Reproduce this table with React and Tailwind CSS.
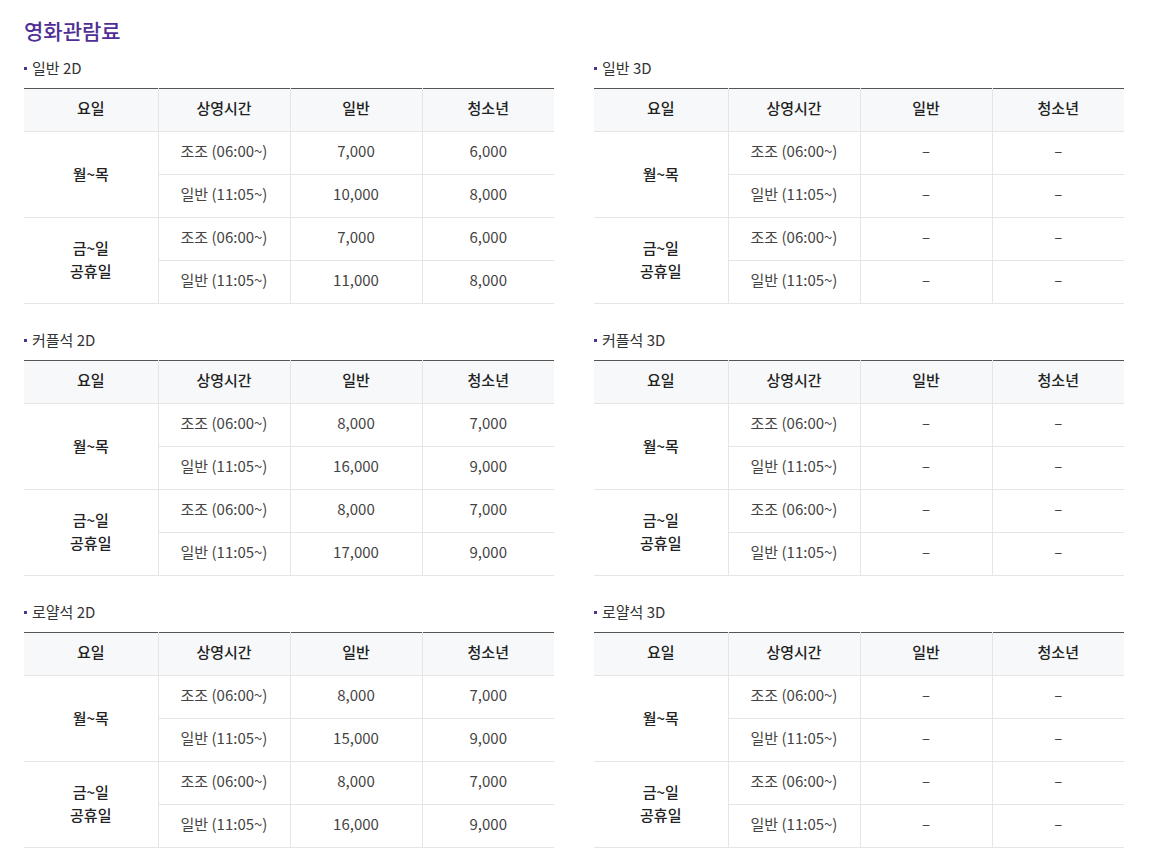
const sections = [
  {
    title: '일반 2D',
    rows: [
      ['7,000', '6,000', '10,000', '8,000'],
      ['7,000', '6,000', '11,000', '8,000'],
    ],
  },
  { title: '일반 3D', rows: null },
  {
    title: '커플석 2D',
    rows: [
      ['8,000', '7,000', '16,000', '9,000'],
      ['8,000', '7,000', '17,000', '9,000'],
    ],
  },
  { title: '커플석 3D', rows: null },
  {
    title: '로얄석 2D',
    rows: [
      ['8,000', '7,000', '15,000', '9,000'],
      ['8,000', '7,000', '16,000', '9,000'],
    ],
  },
  { title: '로얄석 3D', rows: null },
]

const td = 'h-[43px] pb-[3px] border-b border-l border-[#e5e5e5] text-center align-middle'
const th = 'h-[43px] pb-[3px] border-b border-l border-[#e5e5e5] font-medium text-[#222]'

function DayGroup({ label, prices }) {
  const p = prices || ['–', '–', '–', '–']
  return (
    <>
      <tr>
        <td rowSpan={2} className="h-[86px] pb-[3px] border-b border-[#e5e5e5] text-center align-middle font-medium text-[#222] leading-[23px]">
          {label}
        </td>
        <td className={td}>조조 (06:00~)</td>
        <td className={td}>{p[0]}</td>
        <td className={td}>{p[1]}</td>
      </tr>
      <tr>
        <td className={td}>일반 (11:05~)</td>
        <td className={td}>{p[2]}</td>
        <td className={td}>{p[3]}</td>
      </tr>
    </>
  )
}

function PriceTable({ title, rows }) {
  return (
    <div>
      <div className="flex items-center h-[20px] mb-[10px] text-[15px] text-[#333]">
        <span className="w-[3px] h-[3px] bg-[#503396] mr-[5px]" />
        {title}
      </div>
      <table className="w-full table-fixed border-collapse border-t border-[#555] text-[15px] text-[#444]">
        <colgroup>
          <col className="w-[134px]" />
          <col />
          <col />
          <col />
        </colgroup>
        <thead>
          <tr className="bg-[#f7f8f9]">
            <th className="h-[43px] pb-[3px] border-b border-[#e5e5e5] font-medium text-[#222]">요일</th>
            <th className={th}>상영시간</th>
            <th className={th}>일반</th>
            <th className={th}>청소년</th>
          </tr>
        </thead>
        <tbody>
          <DayGroup label="월~목" prices={rows && rows[0]} />
          <DayGroup
            label={
              <>
                금~일
                <br />
                공휴일
              </>
            }
            prices={rows && rows[1]}
          />
        </tbody>
      </table>
    </div>
  )
}

export default function App() {
  return (
    <div className="min-h-screen bg-white pl-[24px] pt-[14px] font-['Noto_Sans_CJK_KR','Noto_Sans',sans-serif]">
      <h2 className="text-[21px] leading-[32px] font-medium text-[#4f2f96] mb-[12px]">영화관람료</h2>
      <div className="grid grid-cols-[530px_530px] gap-x-[40px] gap-y-[26px]">
        {sections.map((s) => (
          <PriceTable key={s.title} title={s.title} rows={s.rows} />
        ))}
      </div>
    </div>
  )
}
